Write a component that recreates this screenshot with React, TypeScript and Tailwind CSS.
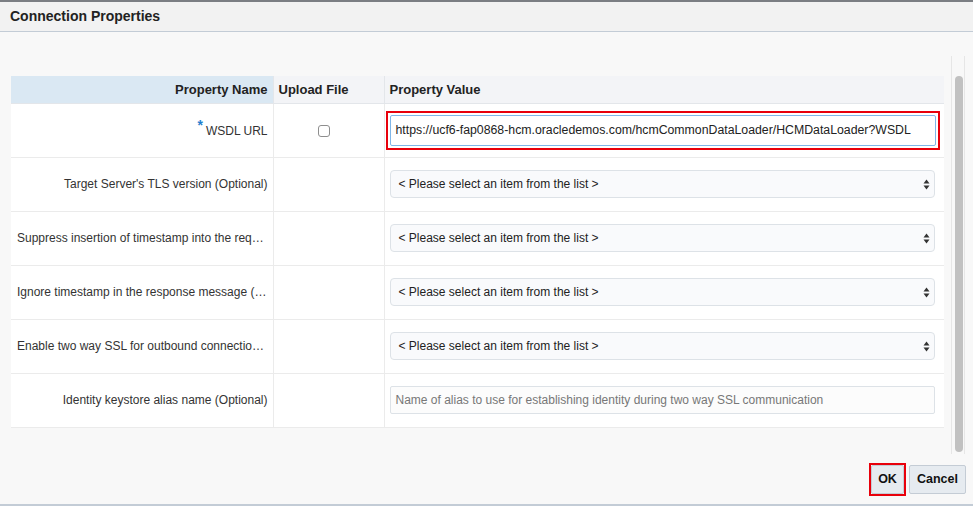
import React from "react";

const rows = [
  { label: "Target Server's TLS version (Optional)" },
  { label: "Suppress insertion of timestamp into the request message (Optional)" },
  { label: "Ignore timestamp in the response message (Optional)" },
  { label: "Enable two way SSL for outbound connection (Optional)" },
];

function SelectArrows() {
  return (
    <svg width="7" height="11" viewBox="0 0 7 11" className="text-[#333]">
      <path d="M3.5 0.5 L6.5 4.5 L0.5 4.5 Z" fill="currentColor" />
      <path d="M3.5 10.5 L6.5 6.5 L0.5 6.5 Z" fill="currentColor" />
    </svg>
  );
}

export default function App() {
  return (
    <div className="h-[506px] w-[973px] overflow-hidden bg-[#f8f8f8] font-['Liberation_Sans',Arial,sans-serif] text-[12px] text-[#333]">
      <div className="h-[2px] bg-[#7b7e83]" />
      <div className="flex h-[30px] items-center border-b border-[#c3ccd6] bg-[#f2f2f2] pl-[10px] text-[14px] font-bold text-[#222]">
        Connection Properties
      </div>

      <div className="flex h-[429px]">
        <div className="w-[944px] pl-[11px] pt-[44px]">
          <table className="w-[933px] table-fixed border-collapse bg-white">
            <colgroup>
              <col className="w-[262px]" />
              <col className="w-[111px]" />
              <col />
            </colgroup>
            <thead>
              <tr className="h-[27px] text-[13px] font-bold text-[#222]">
                <th className="border-r border-b border-[#e3e6ea] bg-[#dae8f3] pr-[5px] text-right">Property Name</th>
                <th className="border-r border-b border-[#e3e6ea] bg-[#f3f4f7] pl-[5px] text-left">Upload File</th>
                <th className="border-b border-[#e3e6ea] bg-[#f3f4f7] pl-[5px] text-left">Property Value</th>
              </tr>
            </thead>
            <tbody>
              <tr className="h-[54px]">
                <td className="border-r border-b border-[#ebebeb] pr-[5px] text-right">
                  <span className="relative -top-[5px] mr-[3px] text-[14px] font-bold text-[#1f7fce]">*</span>
                  WSDL URL
                </td>
                <td className="border-r border-b border-[#ebebeb] pl-[44px] text-left">
                  <span className="inline-block h-[12px] w-[12px] rounded-[3px] border border-[#8e8e8e] bg-white align-middle" />
                </td>
                <td className="border-b border-[#ebebeb] pl-[1px] pr-[4px]">
                  <div className="border-2 border-[#e8000b] p-[2px]">
                    <div className="flex h-[31px] items-center rounded-[2px] border border-[#7fb6e8] bg-white pl-[5px] text-[12.3px] text-[#222]">
                      https://ucf6-fap0868-hcm.oracledemos.com/hcmCommonDataLoader/HCMDataLoader?WSDL
                    </div>
                  </div>
                </td>
              </tr>
              {rows.map((r) => (
                <tr key={r.label} className="h-[54px]">
                  <td className="border-r border-b border-[#ebebeb] pl-[6px] pr-[5px] text-right">
                    <div className="truncate">{r.label}</div>
                  </td>
                  <td className="border-r border-b border-[#ebebeb]" />
                  <td className="border-b border-[#ebebeb] pl-[5px] pr-[9px]">
                    <div className="flex h-[28px] items-center justify-between rounded-[4px] border border-[#dde2e7] bg-[#f9fafc] pl-[8px] pr-[4px] text-[#222]">
                      <span>&lt; Please select an item from the list &gt;</span>
                      <SelectArrows />
                    </div>
                  </td>
                </tr>
              ))}
              <tr className="h-[54px]">
                <td className="border-r border-b border-[#ebebeb] pr-[5px] text-right">Identity keystore alias name (Optional)</td>
                <td className="border-r border-b border-[#ebebeb]" />
                <td className="border-b border-[#ebebeb] pl-[5px] pr-[9px]">
                  <div className="flex h-[28px] items-center rounded-[2px] border border-[#dde2e7] bg-[#fcfcfc] pl-[5px] text-[#777]">
                    Name of alias to use for establishing identity during two way SSL communication
                  </div>
                </td>
              </tr>
            </tbody>
          </table>
        </div>
        <div className="ml-[7px] mt-[24px] h-[398px] w-[14px] border-x border-[#e6e6e6] pt-[20px]">
          <div className="ml-[3px] h-[376px] w-[8px] rounded-full bg-[#c1c1c1]" />
        </div>
      </div>

      <div className="flex h-[43px] items-start justify-end gap-[3px] pr-[7px] pt-[2px]">
        <div className="border-2 border-[#e8000b]">
          <button className="h-[29px] w-[33px] rounded-[2px] border border-[#c4ccd5] bg-[#e6ebf0] text-[12.5px] font-bold text-[#111]">
            OK
          </button>
        </div>
        <button className="mt-[2px] h-[29px] w-[57px] rounded-[2px] border border-[#c4ccd5] bg-[#e6ebf0] text-[12.5px] font-bold text-[#111]">
          Cancel
        </button>
      </div>
      <div className="h-[2px] bg-[#c3ccd6]" />
    </div>
  );
}
